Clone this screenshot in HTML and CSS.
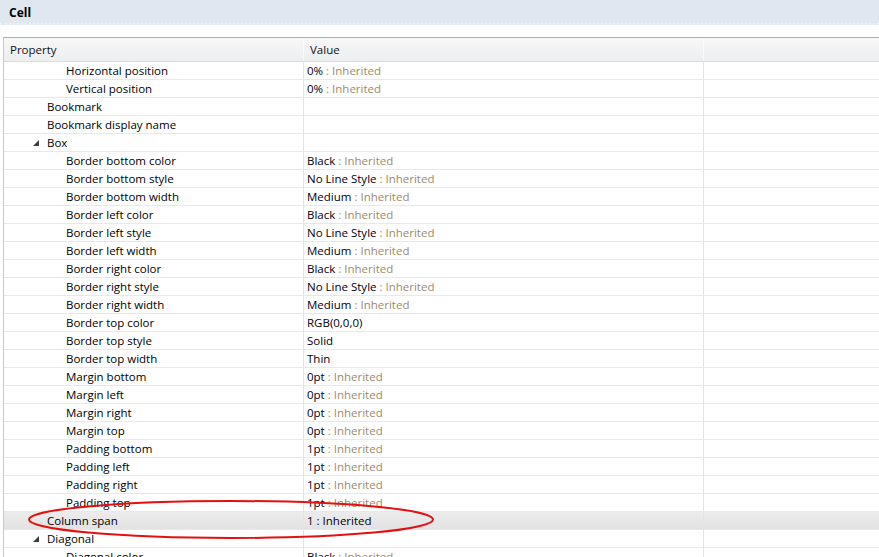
FILE: index.html
```html
<!DOCTYPE html>
<html>
<head>
<meta charset="utf-8">
<link rel="stylesheet" href="styles.css">
</head>
<body>
<div class="titlebar">Cell</div>
<div class="panel">
  <div class="grid">
    <div class="row head">
      <div class="c1"><span class="htext">Property</span></div>
      <div class="c2"><span class="htext">Value</span></div>
      <div class="c3"></div>
    </div>
    <div class="row"><div class="c1 l2">Horizontal position</div><div class="c2"><span class="v">0%</span><span class="inh"> : Inherited</span></div><div class="c3"></div></div>
    <div class="row"><div class="c1 l2">Vertical position</div><div class="c2"><span class="v">0%</span><span class="inh"> : Inherited</span></div><div class="c3"></div></div>
    <div class="row"><div class="c1 l1">Bookmark</div><div class="c2"></div><div class="c3"></div></div>
    <div class="row"><div class="c1 l1">Bookmark display name</div><div class="c2"></div><div class="c3"></div></div>
    <div class="row"><div class="c1 l0"><svg class="exp" width="6" height="6" viewBox="0 0 6 6"><polygon points="6,0 6,6 0,6" fill="#3c3c3c"/></svg>Box</div><div class="c2"></div><div class="c3"></div></div>
    <div class="row"><div class="c1 l2">Border bottom color</div><div class="c2"><span class="v">Black</span><span class="inh"> : Inherited</span></div><div class="c3"></div></div>
    <div class="row"><div class="c1 l2">Border bottom style</div><div class="c2"><span class="v">No Line Style</span><span class="inh"> : Inherited</span></div><div class="c3"></div></div>
    <div class="row"><div class="c1 l2">Border bottom width</div><div class="c2"><span class="v">Medium</span><span class="inh"> : Inherited</span></div><div class="c3"></div></div>
    <div class="row"><div class="c1 l2">Border left color</div><div class="c2"><span class="v">Black</span><span class="inh"> : Inherited</span></div><div class="c3"></div></div>
    <div class="row"><div class="c1 l2">Border left style</div><div class="c2"><span class="v">No Line Style</span><span class="inh"> : Inherited</span></div><div class="c3"></div></div>
    <div class="row"><div class="c1 l2">Border left width</div><div class="c2"><span class="v">Medium</span><span class="inh"> : Inherited</span></div><div class="c3"></div></div>
    <div class="row"><div class="c1 l2">Border right color</div><div class="c2"><span class="v">Black</span><span class="inh"> : Inherited</span></div><div class="c3"></div></div>
    <div class="row"><div class="c1 l2">Border right style</div><div class="c2"><span class="v">No Line Style</span><span class="inh"> : Inherited</span></div><div class="c3"></div></div>
    <div class="row"><div class="c1 l2">Border right width</div><div class="c2"><span class="v">Medium</span><span class="inh"> : Inherited</span></div><div class="c3"></div></div>
    <div class="row"><div class="c1 l2">Border top color</div><div class="c2"><span class="v">RGB(0,0,0)</span></div><div class="c3"></div></div>
    <div class="row"><div class="c1 l2">Border top style</div><div class="c2"><span class="v">Solid</span></div><div class="c3"></div></div>
    <div class="row"><div class="c1 l2">Border top width</div><div class="c2"><span class="v">Thin</span></div><div class="c3"></div></div>
    <div class="row"><div class="c1 l2">Margin bottom</div><div class="c2"><span class="v">0pt</span><span class="inh"> : Inherited</span></div><div class="c3"></div></div>
    <div class="row"><div class="c1 l2">Margin left</div><div class="c2"><span class="v">0pt</span><span class="inh"> : Inherited</span></div><div class="c3"></div></div>
    <div class="row"><div class="c1 l2">Margin right</div><div class="c2"><span class="v">0pt</span><span class="inh"> : Inherited</span></div><div class="c3"></div></div>
    <div class="row"><div class="c1 l2">Margin top</div><div class="c2"><span class="v">0pt</span><span class="inh"> : Inherited</span></div><div class="c3"></div></div>
    <div class="row"><div class="c1 l2">Padding bottom</div><div class="c2"><span class="v">1pt</span><span class="inh"> : Inherited</span></div><div class="c3"></div></div>
    <div class="row"><div class="c1 l2">Padding left</div><div class="c2"><span class="v">1pt</span><span class="inh"> : Inherited</span></div><div class="c3"></div></div>
    <div class="row"><div class="c1 l2">Padding right</div><div class="c2"><span class="v">1pt</span><span class="inh"> : Inherited</span></div><div class="c3"></div></div>
    <div class="row"><div class="c1 l2">Padding top</div><div class="c2"><span class="v">1pt</span><span class="inh"> : Inherited</span></div><div class="c3"></div></div>
    <div class="row sel"><div class="c1 l1">Column span</div><div class="c2"><span class="v">1 : Inherited</span></div><div class="c3"></div></div>
    <div class="row"><div class="c1 l0"><svg class="exp" width="6" height="6" viewBox="0 0 6 6"><polygon points="6,0 6,6 0,6" fill="#3c3c3c"/></svg>Diagonal</div><div class="c2"></div><div class="c3"></div></div>
    <div class="row"><div class="c1 l2">Diagonal color</div><div class="c2"><span class="v">Black</span><span class="inh"> : Inherited</span></div><div class="c3"></div></div>
  </div>
  <svg class="mark" width="408" height="41" viewBox="0 0 408 41"><ellipse cx="204" cy="20.5" rx="202" ry="18.5" fill="none" stroke="#e41010" stroke-width="2"/></svg>
</div>
</body>
</html>
```
FILE: styles.css
```css
html, body {
  margin: 0;
  padding: 0;
  background: #ffffff;
  overflow: hidden;
}
body {
  width: 879px;
  height: 557px;
  font-family: "Open Sans", "Noto Sans", "Liberation Sans", sans-serif;
  font-size: 11.5px;
  color: #000000;
}
.titlebar {
  height: 25px;
  background: #dfe7f0;
  border-bottom: 2px dotted #eef2f7;
  box-sizing: border-box;
  padding-left: 9px;
  font-weight: bold;
  font-size: 12px;
  line-height: 25px;
  color: #000000;
}
.panel {
  position: relative;
  padding-top: 12px;
  padding-left: 3px;
}
.grid {
  border-left: 1px solid #c9c9c9;
  border-top: 1px solid #a8adb3;
}
.row {
  display: flex;
  box-sizing: border-box;
  height: 18px;
  border-bottom: 1px solid #e8e8e8;
  line-height: 17px;
}
.row.head {
  height: 24px;
  line-height: 23px;
  border-bottom: 1px solid #dcdcdc;
  background: linear-gradient(#f7f7f7, #eceef0);
}
.c1, .c2 {
  box-sizing: border-box;
  flex: none;
  white-space: nowrap;
  border-right: 1px solid #e4e4e4;
}
.c1 {
  width: 300px;
  display: flex;
  align-items: center;
}
.c2 {
  width: 400px;
  padding-left: 3px;
}
.c3 {
  flex: 1;
}
.head .c1, .head .c2 {
  border-right: 1px solid #fbfbfb;
  padding-left: 6px;
}
.htext { color: #111111; }
.l2 { padding-left: 62px; }
.l1 { padding-left: 43px; }
.l0 { padding-left: 29px; }
.exp {
  margin-right: 8px;
  flex: none;
}
.v { color: #000010; }
.inh { color: #9c8b6b; }
.row.sel {
  background: linear-gradient(#ececec, #e2e2e2);
}
.mark {
  position: absolute;
  left: 27px;
  top: 474px;
}
```
